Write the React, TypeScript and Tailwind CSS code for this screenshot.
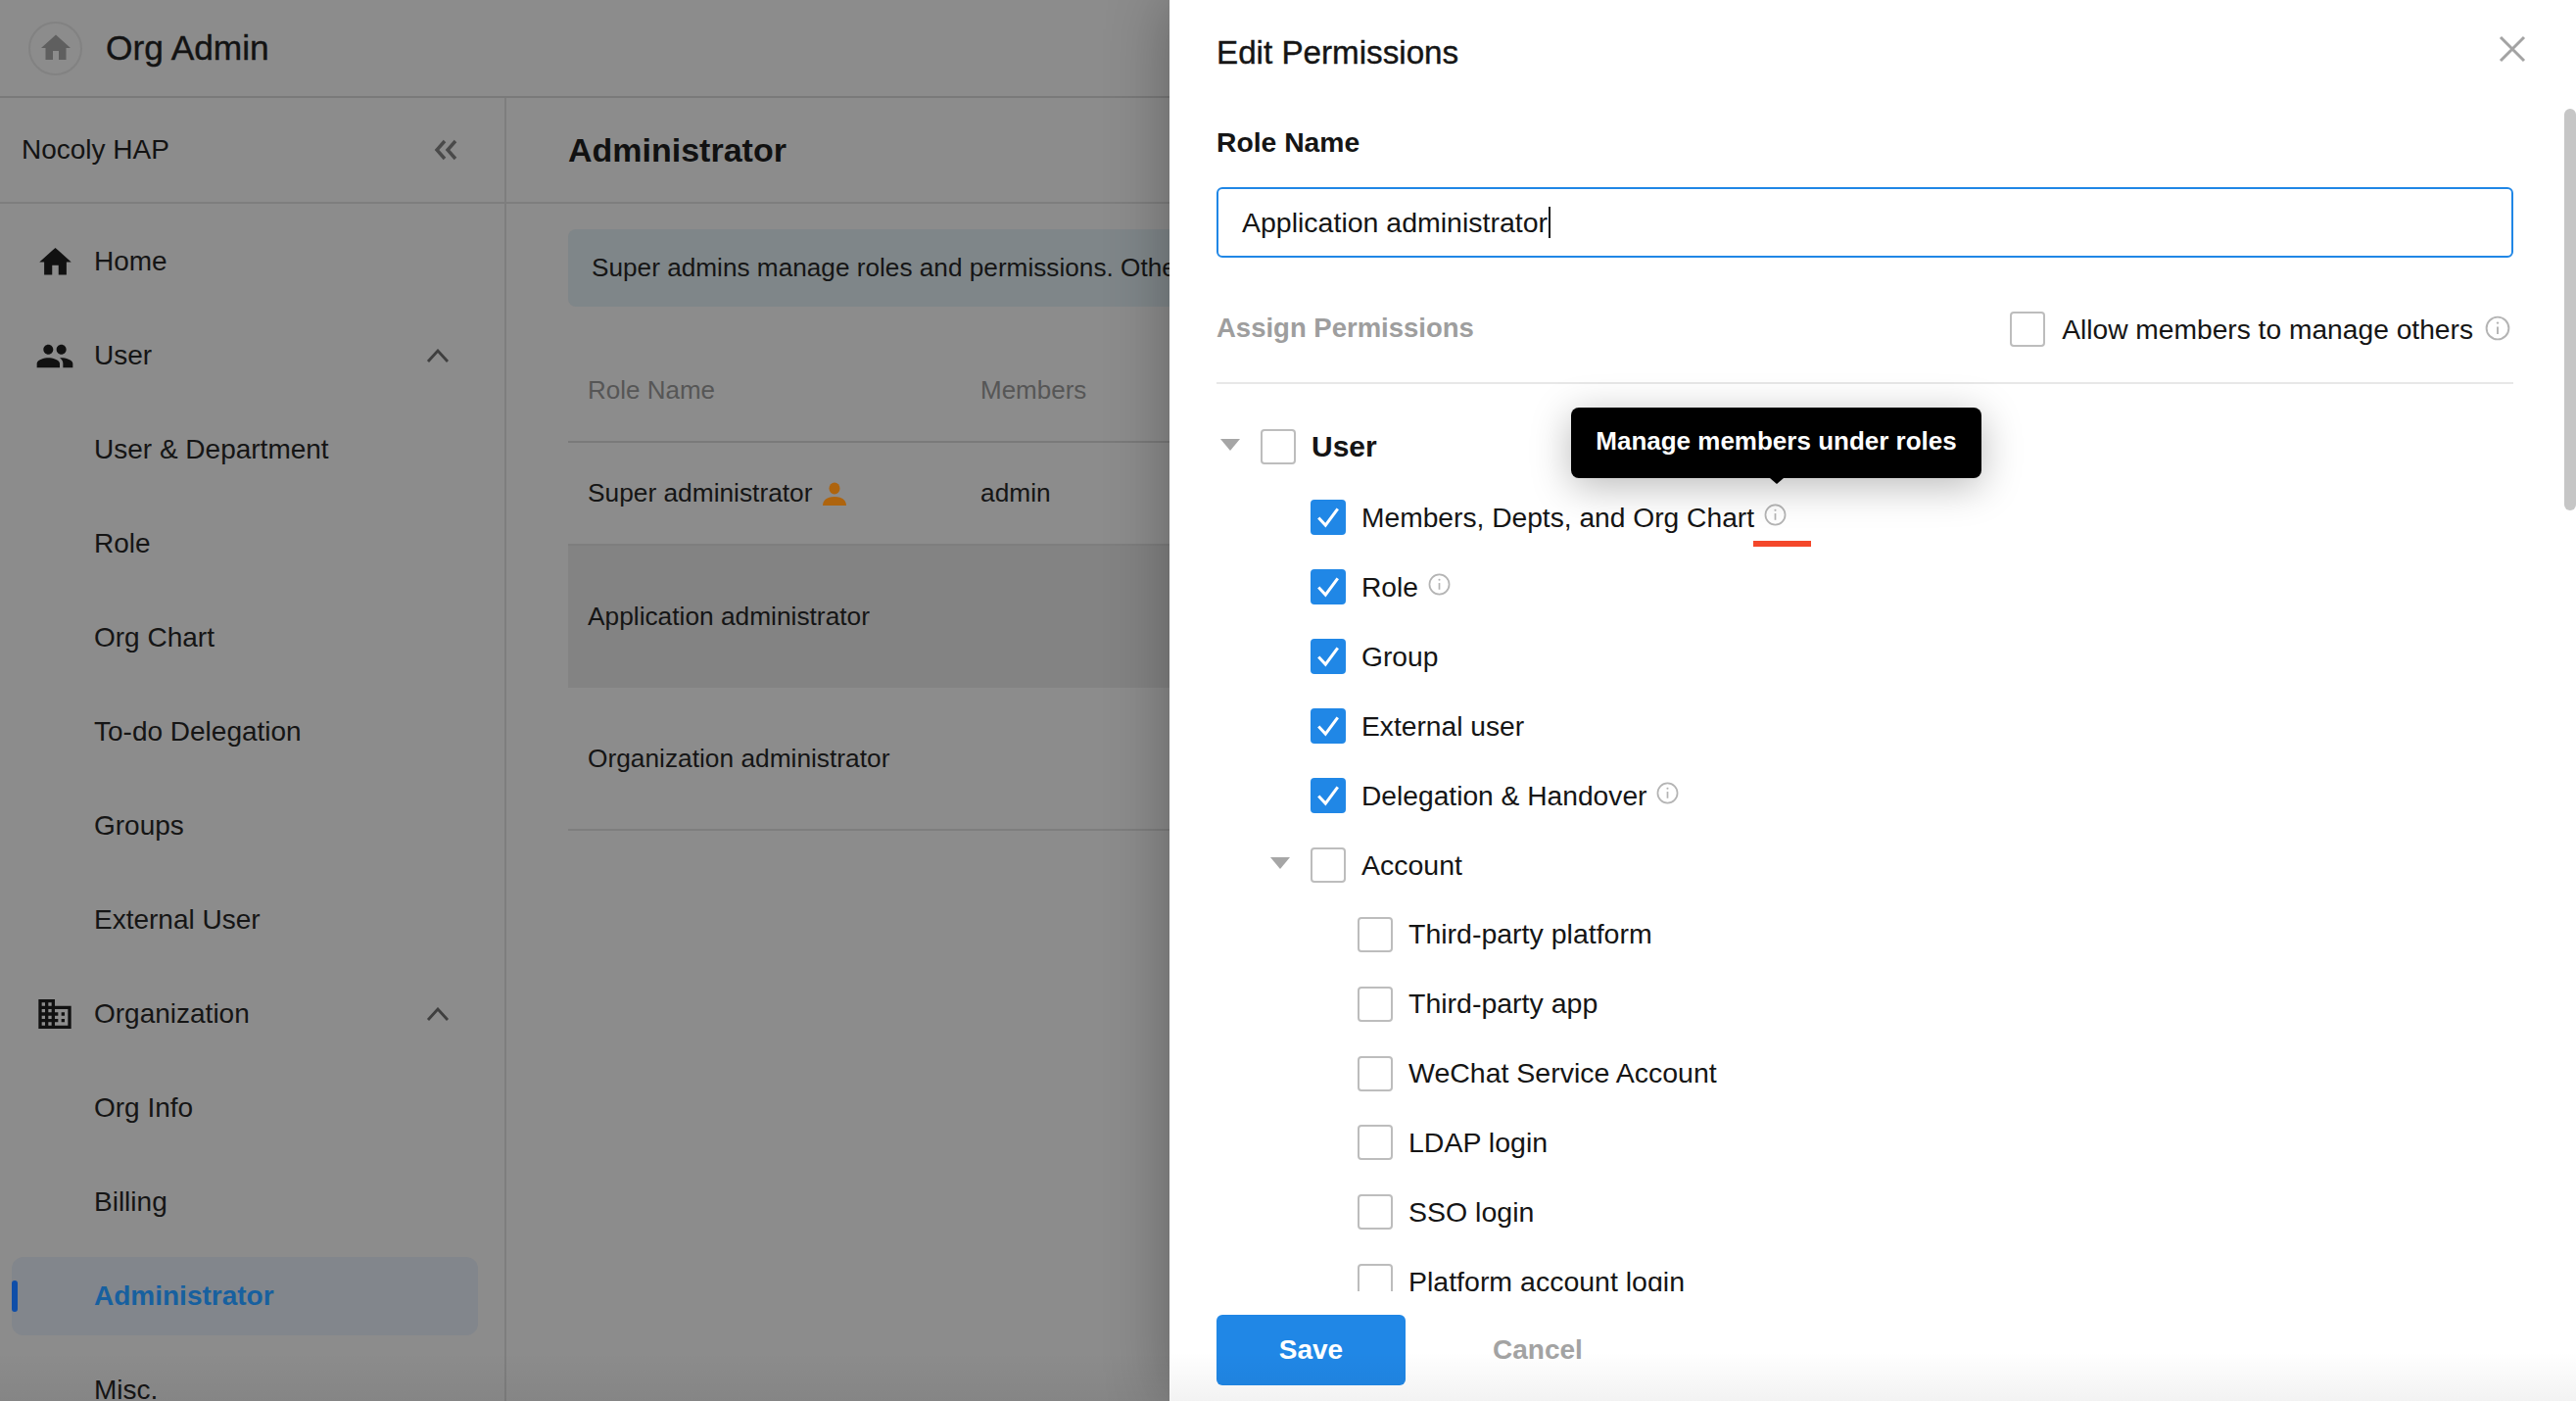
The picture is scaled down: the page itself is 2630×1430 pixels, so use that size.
import { MdDomain, MdHome, MdPeople } from 'react-icons/md';

const sans = { fontFamily: '"Liberation Sans", Arial, sans-serif' };

function Chevron() {
  return (
    <svg width="24" height="14" viewBox="0 0 24 14" fill="none" stroke="#3f3f3f" strokeWidth="2.8" className="ml-auto mr-[56px]">
      <path d="M2 13 12 2l10 11" />
    </svg>
  );
}

function InfoIcon({ size = 23 }: { size?: number }) {
  return (
    <svg width={size} height={size} viewBox="0 0 24 24" fill="none" stroke="#b4b4b4" strokeWidth="1.8" className="shrink-0">
      <circle cx="12" cy="12" r="10.5" />
      <path d="M12 10.5v7" />
      <circle cx="12" cy="7" r="1.1" fill="#b4b4b4" stroke="none" />
    </svg>
  );
}

function Box({ checked = false }: { checked?: boolean }) {
  if (checked) {
    return (
      <span className="flex h-[36px] w-[36px] shrink-0 items-center justify-center rounded-[4px] bg-[#2087e6]">
        <svg width="26" height="26" viewBox="0 0 24 24" fill="none" stroke="#fff" strokeWidth="2.8">
          <path d="M3 12.5l6.5 7L21 4" />
        </svg>
      </span>
    );
  }
  return <span className="h-[36px] w-[36px] shrink-0 rounded-[4px] border-2 border-[#bdbdbd] bg-white" />;
}

function Caret({ left }: { left: number }) {
  return (
    <svg width="20" height="12" viewBox="0 0 20 12" className="absolute top-[28px]" style={{ left }}>
      <path d="M0 0h20L10 12z" fill="#a6a6a6" />
    </svg>
  );
}

const nav = [
  { label: 'Home', icon: <MdHome size={39} color="#111" /> },
  { label: 'User', icon: <MdPeople size={41} color="#111" />, open: true },
  { label: 'User & Department' },
  { label: 'Role' },
  { label: 'Org Chart' },
  { label: 'To-do Delegation' },
  { label: 'Groups' },
  { label: 'External User' },
  { label: 'Organization', icon: <MdDomain size={40} color="#111" />, open: true },
  { label: 'Org Info' },
  { label: 'Billing' },
  { label: 'Administrator', active: true },
  { label: 'Misc.' },
];

const perms = [
  { label: 'Members, Depts, and Org Chart', checked: true, info: true },
  { label: 'Role', checked: true, info: true },
  { label: 'Group', checked: true },
  { label: 'External user', checked: true },
  { label: 'Delegation & Handover', checked: true, info: true },
];

const accountItems = ['Third-party platform', 'Third-party app', 'WeChat Service Account', 'LDAP login', 'SSO login', 'Platform account login'];

function Sidebar() {
  return (
    <aside className="flex w-[517px] shrink-0 flex-col border-r-2 border-[#7e7e7e]">
      <div className="flex h-[108px] shrink-0 items-center justify-between border-b-2 border-[#7e7e7e] pl-[22px] pr-[48px] text-[28px] text-[#131313]">
        <span>Nocoly HAP</span>
        <svg width="24" height="22" viewBox="0 0 24 22" fill="none" stroke="#4a4a4a" strokeWidth="3.4">
          <path d="M11 2 3 11l8 9M22 2l-8 9 8 9" />
        </svg>
      </div>
      <nav className="pt-[11px]">
        {nav.map((item) =>
          item.active ? (
            <div key={item.label} className="flex h-[96px] items-center px-[12px]">
              <div className="relative flex h-[80px] w-[476px] items-center rounded-[12px] bg-[#82868c] pl-[84px] text-[28px] font-bold text-[#17609f]">
                <span className="absolute left-0 top-[24px] h-[32px] w-[6px] rounded-[3px] bg-[#0f4ea8]" />
                {item.label}
              </div>
            </div>
          ) : (
            <div key={item.label} className="flex h-[96px] items-center text-[28px] text-[#151515]">
              <span className="ml-[36px] mr-[20px] flex w-[40px] justify-center">{item.icon}</span>
              {item.label}
              {item.open && <Chevron />}
            </div>
          ),
        )}
      </nav>
    </aside>
  );
}

function RolesPage() {
  return (
    <main className="min-w-0 flex-1 overflow-hidden">
      <div className="flex h-[108px] items-center border-b-2 border-[#7e7e7e] pl-[63px] text-[34px] font-bold text-[#111]">Administrator</div>
      <div className="w-[1500px] pl-[63px]">
        <div className="mt-[26px] flex h-[79px] items-center whitespace-nowrap rounded-[8px] bg-[#7f8689] pl-[24px] text-[26.2px] text-[#151515]">
          Super admins manage roles and permissions. Others
        </div>
        <div className="mt-[34px] flex h-[105px] items-center border-b-2 border-[#7a7a7a] pl-[20px] text-[26px] text-[#565656]">
          <span className="w-[401px]">Role Name</span>
          <span>Members</span>
        </div>
        <div className="flex h-[105px] items-center border-b-2 border-[#7e7e7e] pl-[20px] text-[26.3px] text-[#151515]">
          <span className="flex w-[401px] items-center gap-[11px]">
            Super administrator
            <svg width="24" height="24" viewBox="0 0 24 24" fill="#ae640e">
              <ellipse cx="12" cy="6.5" rx="5.5" ry="6" />
              <path d="M0 24c0-6 5-9 12-9s12 3 12 9z" />
            </svg>
          </span>
          <span>admin</span>
        </div>
        <div className="flex h-[145px] items-center bg-[#838383] pl-[20px] text-[26.3px] text-[#151515]">Application administrator</div>
        <div className="flex h-[146px] items-center border-b-2 border-[#7e7e7e] pl-[20px] pt-[2px] text-[26.3px] text-[#151515]">Organization administrator</div>
      </div>
    </main>
  );
}

function PermissionsDrawer() {
  return (
    <section className="absolute inset-y-0 right-0 flex w-[1436px] flex-col bg-white pl-[48px] pr-[64px] text-[#151515] shadow-[0_0_60px_rgba(0,0,0,0.3)]">
      <div className="flex h-[108px] shrink-0 items-center justify-between text-[33.2px]">
        <span className="[-webkit-text-stroke:0.4px_#151515]">Edit Permissions</span>
        <svg width="28" height="28" viewBox="0 0 28 28" fill="none" stroke="#a3a3a3" strokeWidth="3" className="mr-[-13px] mt-[-8px]">
          <path d="M2 2l24 24M26 2 2 26" />
        </svg>
      </div>
      <div className="flex h-[76px] shrink-0 items-center pb-[2px] text-[28.3px] font-bold">Role Name</div>
      <div className="mt-[7px] flex h-[72px] shrink-0 items-center rounded-[6px] border-2 border-[#2087e6] pl-[24px] text-[28.5px]">
        Application administrator
        <span className="ml-[1px] h-[32px] w-[2px] bg-[#111]" />
      </div>
      <div className="flex h-[129px] shrink-0 items-center justify-between border-b-2 border-[#e8e8e8] pt-[18px]">
        <span className="mt-[-2px] text-[27.5px] font-bold text-[#9e9e9e]">Assign Permissions</span>
        <span className="mt-[2px] flex items-center text-[28.2px]">
          <Box />
          <span className="ml-[17px]">Allow members to manage others</span>
          <span className="ml-[12px] mr-[3px] mt-[-3px]"><InfoIcon size={26} /></span>
        </span>
      </div>

      <div className="min-h-0 flex-1 overflow-hidden pt-[28px] text-[28.2px]">
        <div className="relative mb-[2px] flex h-[71px] items-center pl-[45px]">
          <Caret left={4} />
          <Box />
          <span className="ml-[16px] text-[30px] font-bold">User</span>
        </div>
        {perms.map((p) => (
          <div key={p.label} className="flex h-[70.9px] items-center pl-[96px]">
            <Box checked={p.checked} />
            <span className="ml-[16px]">{p.label}</span>
            {p.info && <span className="ml-[10px] mt-[-6px]"><InfoIcon /></span>}
          </div>
        ))}
        <div className="relative flex h-[70.9px] items-center pl-[96px]">
          <Caret left={55} />
          <Box />
          <span className="ml-[16px] text-[28.5px]">Account</span>
        </div>
        {accountItems.map((label) => (
          <div key={label} className="flex h-[70.9px] items-center pl-[144px]">
            <Box />
            <span className="ml-[16px] whitespace-nowrap text-[28.5px]">{label}</span>
          </div>
        ))}
      </div>

      <div className="flex h-[112px] shrink-0 items-start pt-[24px] text-[28px] font-bold">
        <button className="h-[72px] w-[193px] rounded-[6px] bg-[#2087e6] text-white">Save</button>
        <button className="ml-[89px] h-[72px] text-[#a3a3a3]">Cancel</button>
      </div>

      {/* Tooltip on the first info icon */}
      <div className="absolute left-[410px] top-[416px] flex h-[72px] w-[419px] items-center justify-center rounded-[8px] bg-black pb-[3px] text-[26px] font-bold text-white shadow-[0_8px_40px_rgba(0,0,0,0.28)]">
        Manage members under roles
        <span className="absolute left-[203px] top-[72px] h-0 w-0 border-x-[7px] border-t-[6px] border-x-transparent border-t-black" />
      </div>
      <span className="absolute left-[596px] top-[552px] h-[6px] w-[59px] bg-[#f4472a]" />
      <span className="absolute right-0 top-[111px] h-[410px] w-[12px] rounded-[6px] bg-[#c6c6c6]" />
    </section>
  );
}

export default function App() {
  return (
    <div className="relative flex h-[1430px] w-[2630px] flex-col overflow-hidden bg-[#8c8c8c]" style={sans}>
      <header className="flex h-[100px] shrink-0 items-center border-b-2 border-[#7a7a7a] pl-[29px]">
        <span className="flex h-[55px] w-[55px] items-center justify-center rounded-full border-2 border-[#828282]">
          <MdHome size={36} color="#5f5f5f" />
        </span>
        <span className="ml-[24px] text-[35.3px] text-[#131313] [-webkit-text-stroke:0.4px_#131313]">Org Admin</span>
      </header>
      <div className="flex min-h-0 flex-1">
        <Sidebar />
        <RolesPage />
      </div>
      <PermissionsDrawer />
      <div className="pointer-events-none absolute inset-x-0 bottom-0 h-[50px] bg-gradient-to-b from-transparent to-black/5" />
    </div>
  );
}
